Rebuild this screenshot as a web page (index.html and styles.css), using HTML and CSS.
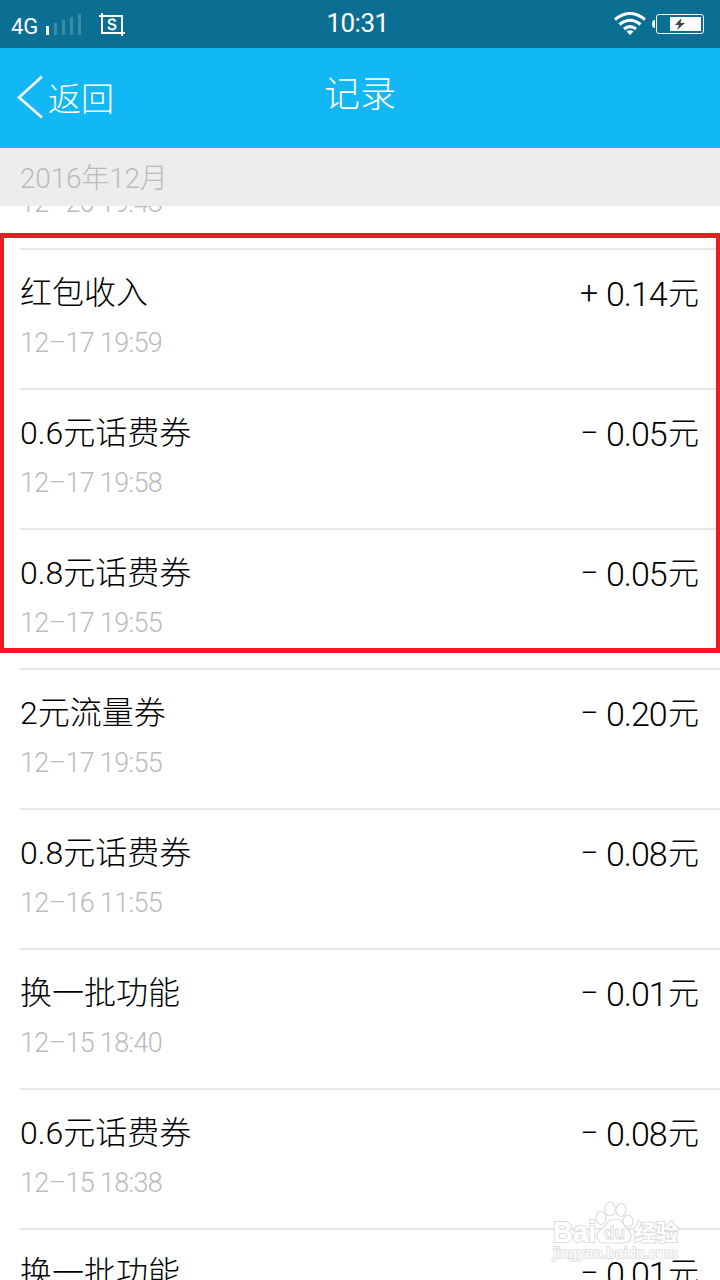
FILE: index.html
```html
<!DOCTYPE html>
<html lang="zh-CN">
<head>
  <meta charset="UTF-8">
  <title>记录</title>
  <link rel="stylesheet" href="styles.css">
</head>
<body>
  <div class="status-bar">
    <div class="status-left">
      <span class="network">4G</span>
      <svg class="signal" width="36" height="22" viewBox="0 0 36 22" fill="#fff">
        <rect x="0" y="12" width="3" height="9"/>
        <g opacity="0.2">
          <rect x="8" y="9" width="3" height="12"/>
          <rect x="16" y="6" width="3" height="15"/>
          <rect x="24" y="3" width="3" height="18"/>
          <rect x="32" y="0" width="3" height="21"/>
        </g>
      </svg>
      <svg class="shot" width="26" height="23" viewBox="0 0 26 23" fill="none" stroke="#fff" stroke-width="2">
        <path d="M0 3H23V23M3 0V20H26"/>
        <path d="M16.4 8.6C15.5 5.4 9.8 5.8 9.8 8.8C9.8 12.4 16.6 10.3 16.6 13.8C16.6 17.4 10 17.2 9.4 13.6"/>
      </svg>
    </div>
    <span class="clock">10:31</span>
    <div class="status-right">
      <svg width="32" height="23" viewBox="0 0 32 23" fill="none" stroke="#fff" stroke-width="3">
        <path d="M1 7.5Q16-4.5 31 7.5M5.5 12.5Q16 4 26.5 12.5M10 17Q16 12.2 22 17"/>
        <path d="M12.5 19.5Q16 17 19.5 19.5L16 23Z" fill="#fff" stroke="none"/>
      </svg>
      <svg width="52" height="20" viewBox="0 0 52 20">
        <path d="M3 6Q0 6 0 10T3 14Z" fill="#fff"/>
        <rect x="4.5" y=".5" width="47" height="19" rx="2.5" fill="none" stroke="#fff"/>
        <rect x="18" y="3" width="31" height="14" fill="#fff"/>
        <path d="M29.5 4L23 11H27L25 16L33 9H28.5Z" fill="#444"/>
      </svg>
    </div>
  </div>

  <header>
    <a class="back">
      <svg width="26" height="44" viewBox="0 0 26 44" fill="none" stroke="#fff" stroke-width="2.6">
        <path d="M25 1.5L2 22.5L25 42.5"/>
      </svg>
      <span>返回</span>
    </a>
    <h1>记录</h1>
  </header>

  <div class="month">2016年12月</div>

  <div class="records">
    <div class="record record-cut"><div class="date">12–20 19:48</div></div>
    <div class="record">
      <div class="title">红包收入</div>
      <div class="amount"><span class="sign">+</span><span class="num">0.14</span><span class="unit">元</span></div>
      <div class="date">12–17 19:59</div>
    </div>
    <div class="record">
      <div class="title">0.6元话费券</div>
      <div class="amount"><span class="sign">−</span><span class="num">0.05</span><span class="unit">元</span></div>
      <div class="date">12–17 19:58</div>
    </div>
    <div class="record">
      <div class="title">0.8元话费券</div>
      <div class="amount"><span class="sign">−</span><span class="num">0.05</span><span class="unit">元</span></div>
      <div class="date">12–17 19:55</div>
    </div>
    <div class="record">
      <div class="title">2元流量券</div>
      <div class="amount"><span class="sign">−</span><span class="num">0.20</span><span class="unit">元</span></div>
      <div class="date">12–17 19:55</div>
    </div>
    <div class="record">
      <div class="title">0.8元话费券</div>
      <div class="amount"><span class="sign">−</span><span class="num">0.08</span><span class="unit">元</span></div>
      <div class="date">12–16 11:55</div>
    </div>
    <div class="record">
      <div class="title">换一批功能</div>
      <div class="amount"><span class="sign">−</span><span class="num">0.01</span><span class="unit">元</span></div>
      <div class="date">12–15 18:40</div>
    </div>
    <div class="record">
      <div class="title">0.6元话费券</div>
      <div class="amount"><span class="sign">−</span><span class="num">0.08</span><span class="unit">元</span></div>
      <div class="date">12–15 18:38</div>
    </div>
    <div class="record record-last">
      <div class="title">换一批功能</div>
      <div class="amount"><span class="sign">−</span><span class="num">0.01</span><span class="unit">元</span></div>
    </div>
  </div>

  <div class="highlight"></div>

  <svg class="watermark" width="140" height="66" viewBox="0 0 140 66">
    <g fill="#fff" stroke="#dcdcdc" stroke-width="1.2">
      <ellipse cx="51" cy="18" rx="5" ry="6.5"/>
      <ellipse cx="60" cy="9" rx="5" ry="7"/>
      <ellipse cx="71" cy="10" rx="5" ry="6.5"/>
      <ellipse cx="78" cy="21" rx="5" ry="6"/>
      <path d="M65 19C57 19 56 27 50 30C44 35 47 43 54 43H74C82 43 83 35 78 30C73 26 73 19 65 19Z"/>
    </g>
    <text class="wm-brand" x="3" y="42" textLength="43" lengthAdjust="spacingAndGlyphs">Bai</text>
    <text class="wm-du" x="54" y="39" textLength="21" lengthAdjust="spacingAndGlyphs">du</text>
    <text class="wm-cn" x="84" y="40">经验</text>
    <text class="wm-url" x="3" y="58" textLength="125" lengthAdjust="spacingAndGlyphs">jingyan.baidu.com</text>
  </svg>
</body>
</html>
```
FILE: styles.css
```css
* {
  box-sizing: border-box;
}
body {
  margin: 0;
  position: relative;
  width: 720px;
  height: 1280px;
  overflow: hidden;
  background: #fff;
  color: #000;
  font-family: Roboto, "Noto Sans CJK SC", sans-serif;
  font-weight: 300;
}
.status-bar {
  display: grid;
  grid-template-columns: 1fr auto 1fr;
  height: 48px;
  padding: 0 16px 0 11px;
  background: #0b6e93;
  color: #fff;
}
.status-left {
  display: flex;
  align-items: flex-start;
}
.network {
  width: 35px;
  padding-top: 13px;
  font: 400 22px/28px Roboto, sans-serif;
}
.signal {
  margin-top: 14px;
}
.shot {
  margin: 13px 0 0 17px;
}
.clock {
  padding-top: 8px;
  font: 400 26px/30px Roboto, sans-serif;
  letter-spacing: -0.5px;
}
.status-right {
  display: flex;
  justify-content: flex-end;
  gap: 6px;
  padding-top: 14px;
  height: 37px;
}
.status-right svg:first-child {
  margin-top: -2px;
}
header {
  display: grid;
  grid-template-columns: 1fr auto 1fr;
  height: 100px;
  padding: 0 17px;
  background: #12b7f5;
  color: #fff;
}
.back {
  display: flex;
  gap: 5px;
  padding-top: 27px;
  font-size: 33px;
}
.back span {
  line-height: 50px;
}
header h1 {
  margin: 0;
  padding-top: 22px;
  font-size: 36px;
  font-weight: 300;
  line-height: 50px;
}
.month {
  height: 58px;
  padding-left: 20px;
  background: #ededed;
  color: #bbb;
  font-size: 28px;
  line-height: 62px;
  letter-spacing: -0.2px;
}
.records {
  height: 1074px;
  overflow: hidden;
}
.record {
  display: grid;
  grid-template-columns: 1fr auto;
  grid-template-rows: 65px 1fr;
  height: 140px;
  margin-left: 20px;
  padding: 10px 21px 0 0;
  border-bottom: 2px solid #e6e6e6;
}
.record-last {
  height: 50px;
  border-bottom: none;
}
.title {
  font-size: 32px;
  line-height: 66px;
}
.amount {
  display: flex;
  line-height: 68px;
}
.sign {
  width: 26px;
  font-size: 32px;
  line-height: 66px;
}
.num {
  width: 62px;
  font-size: 34px;
  letter-spacing: -1px;
}
.unit {
  font-size: 31px;
  line-height: 68px;
}
.date {
  color: #bbb;
  font-size: 27px;
  line-height: 36px;
  letter-spacing: -0.7px;
}
.record-cut {
  display: block;
  height: 44px;
  padding: 0;
  overflow: hidden;
}
.record-cut .date {
  margin-top: -21px;
}
.highlight {
  position: absolute;
  top: 233px;
  left: 0;
  width: 720px;
  height: 420px;
  border: 5px solid #ed1c24;
  border-width: 5px 4px;
}
.watermark {
  position: absolute;
  left: 550px;
  top: 1200px;
}
.watermark text {
  fill: #fff;
  stroke: #dcdcdc;
  stroke-width: 1px;
  font-family: "Liberation Sans", "Noto Sans CJK SC", sans-serif;
  font-weight: 700;
}
.watermark .wm-brand {
  font-size: 29px;
  paint-order: stroke;
  stroke-width: 2px;
}
.wm-du {
  font-size: 19px;
}
.watermark .wm-cn {
  font-size: 22px;
  paint-order: stroke;
  stroke-width: 2px;
}
.watermark .wm-url {
  font-size: 15px;
  font-weight: 400;
  paint-order: stroke;
  stroke: #e2e2e2;
  stroke-width: 2px;
}
```
